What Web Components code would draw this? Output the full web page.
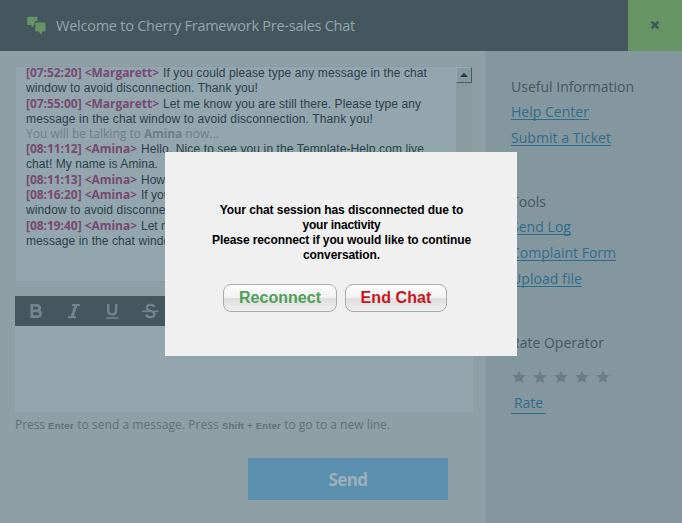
<!DOCTYPE html>
<html lang="en"><head><meta charset="utf-8"><title>Pre-sales Chat</title>
<style>
html,body{margin:0;width:682px;height:523px;overflow:hidden;background:#8e9fa6}
</style></head><body>
<chat-app></chat-app>
<script>
function define(name, html, ready){
  const t=document.createElement('template'); t.innerHTML=html;
  customElements.define(name, class extends HTMLElement{
    constructor(){super();this.attachShadow({mode:'open'}).append(t.content.cloneNode(true));}
    connectedCallback(){ if(ready) ready.call(this,this.shadowRoot); }
  });
}
/* Run of text tracked so that it spans the width given in "w". */
define('fit-text',`<style>:host{display:inline-block;white-space:pre}</style><slot></slot>`,function(){
  const w=+this.getAttribute('w'); if(!w) return;
  const n=this.textContent.length, nat=this.getBoundingClientRect().width;
  this.style.letterSpacing=((w-nat)/n).toFixed(4)+'px';
});
define('chat-header',`<style>
:host{display:flex;height:51px;background:#44565e;color:#93a6ae;font:14.5px/51px "Open Sans",sans-serif}
svg.b{width:19px;height:19px;margin:16px 10px 0 26.5px;flex:none}
.t{flex:1;padding-left:.5px}
.x{width:54px;background:#669465;display:flex;align-items:center;justify-content:center}
.x svg{margin-top:-2px}
</style>
<svg class="b" viewBox="0 0 19 19" fill="#669465"><path d="M1 .8h8.4q1 0 1 1V5H9.300q-1.800 0-1.800 1.800v1.700L5 11.600 4.300 9H1.500q-1.200 0-1.200-1.200V1.800q0-1 .7-1z"/><path d="M9.500 6.500h7.800q1.200 0 1.200 1.200v6.600q0 1.200-1.200 1.200H15.300l-.8 3.200L11.500 15.500H9.500q-1.200 0-1.200-1.200V7.700Q8.300 6.500 9.500 6.500z"/></svg>
<div class="t"><fit-text w="299">Welcome to Cherry Framework Pre-sales Chat</fit-text></div>
<div class="x"><svg width="10" height="10" viewBox="0 0 10 10"><path d="M1.600 1.600L8.400 8.400M8.400 1.600L1.600 8.400" stroke="#3f5a5a" stroke-width="2.700"/></svg></div>`);
define('chat-line',`<style>
:host{display:flex;box-sizing:border-box;height:15px;align-items:baseline;white-space:pre;font:12px/15px "Liberation Sans",Arial,sans-serif;color:#2b4049}
::slotted([slot=who]){font:bold 12px/15px "Open Sans",sans-serif;color:#774a70;margin-right:4px}
:host([wrap]){padding-top:1px}
:host([tall]){height:16px}
:host([info]){font:12px/15px "Open Sans",sans-serif;color:#6c7f86}
</style><slot name="who"></slot><slot></slot>`);
define('chat-log',`<style>
:host{display:flex;box-sizing:border-box;width:458px;height:216px;border:1px solid #8a9ca3;border-top-color:#889ba2;background:#93a6ad}
.m{flex:1;padding-left:10px;margin-top:-2px}
.s{width:16px;background:#899b9f}
.u{box-sizing:border-box;height:16px;border:1px solid;border-color:#9aacb3 #485b62 #485b62 #9aacb3;background:#869aa1;display:flex;align-items:center;justify-content:center}
</style><div class="m"><slot></slot></div><div class="s"><div class="u"><svg width="8" height="4"><path d="M0 4L4 0L8 4z" fill="#243940"/></svg></div></div>`);
define('chat-editor',`<style>
:host{display:block;width:458px}
.bar{height:30px;background:#44565e;display:flex;align-items:center;padding-left:11px;color:#71858c}
.bar svg{width:20px;height:20px;margin-right:18px;flex:none}
.a{height:86px;background:#93a6ad}
</style><div class="bar">
<svg viewBox="0 0 20 20" fill="none" stroke="currentColor" stroke-width="2.800"><path d="M5.800 4.400h4.700q3.200 0 3.200 2.700t-3.200 2.700H5.800zM5.800 9.800h5.400q3.400 0 3.400 2.900t-3.400 2.900H5.800z"/></svg>
<svg viewBox="0 0 20 20" fill="none" stroke="currentColor"><path d="M8 4h8M4 16.200h8" stroke-width="1.900"/><path d="M12 4L8 16.200" stroke-width="3"/></svg>
<svg viewBox="0 0 20 20" fill="none" stroke="currentColor"><path d="M6.200 3v6.300q0 4.200 4 4.200t4-4.200V3" stroke-width="2.300"/><path d="M4 17h12.400" stroke-width="1.700"/></svg>
<svg viewBox="0 0 20 20" fill="none" stroke="currentColor"><path d="M14.300 6Q13.500 3.800 10.300 3.800T6.700 6.600Q6.700 8.800 10 9.600T14.500 13Q14.500 16.200 10.500 16.200T6.200 13.500" stroke-width="2.300"/><path d="M2 10.300h16.500" stroke-width="1.600"/></svg>
</div><div class="a"></div>`);
define('side-group',`<style>
:host{display:block;font:14px/26px "Open Sans",sans-serif;color:#44565e}
.h{height:25px;line-height:25px}
</style><div class="h"><slot name="title"></slot></div><slot></slot>`);
define('side-link',`<style>
:host{display:block;height:26px;line-height:26px;color:#2f6c8b}
a{display:inline-block;line-height:14px;height:14px;border-bottom:1px solid #2f6c8b;white-space:pre}
</style><a><slot></slot></a>`);
define('star-row',`<style>:host{display:flex;gap:7px;height:14px;padding-left:.6px}svg{width:14px;height:14px}</style>`,function(r){
  for(let i=0;i<5;i++) r.innerHTML+='<svg viewBox="0 0 14 14"><path fill="#6b7e86" d="M7 .4l1.900 4.300 4.800.5-3.500 3.200 1 4.700L7 10.700l-4.200 2.400 1-4.700L.3 5.200l4.800-.5z"/></svg>';
});
define('modal-button',`<style>
:host{display:flex;box-sizing:border-box;height:28px;border:1px solid #a9aaad;border-radius:8px;background:linear-gradient(#fdfdfd,#f1f1f1 48%,#dedede 52%,#efefef);align-items:center;justify-content:center;font:bold 16px/26px "Liberation Sans",Arial,sans-serif}
</style><slot></slot>`);
define('session-modal',`<style>
:host{position:absolute;left:165px;top:152px;width:352px;height:204px;background:#f0f0f0;box-sizing:border-box;padding-top:51px;display:flex;flex-direction:column;align-items:center;font:bold 12px/15px "Liberation Sans",Arial,sans-serif;color:#000}
.b{display:flex;gap:8px;margin-top:20.500px;margin-right:12px}
.l{height:15px;padding-left:1px}
</style>
<div class="l"><fit-text w="243.500">Your chat session has disconnected due to</fit-text></div>
<div class="l"><fit-text w="78">your inactivity</fit-text></div>
<div class="l"><fit-text w="259">Please reconnect if you would like to continue</fit-text></div>
<div class="l"><fit-text w="77">conversation.</fit-text></div>
<div class="b"><modal-button style="width:114px;color:#4f9f56"><fit-text w="82">Reconnect</fit-text></modal-button>
<modal-button style="width:102px;color:#c8161d"><fit-text w="71">End Chat</fit-text></modal-button></div>`);
define('chat-app',`<style>
:host{display:block;position:relative;width:682px;height:523px;background:#8e9fa6;overflow:hidden}
.body{display:flex;height:472px}
main{width:486px;box-sizing:border-box;padding:15px 0 0 15px}
aside{flex:1;background:#85979e;padding:23px 0 0 25px}
chat-editor{margin-top:14px}
.hint{display:flex;align-items:baseline;white-space:pre;font:12px/16px "Open Sans",sans-serif;color:#5f7279;margin-top:5px;height:16px}
.hint b{font:bold 9.500px/16px "Liberation Sans",Arial,sans-serif}
.send{width:200px;height:42px;margin:25px 0 0 233px;background:#5b8fae;color:#9db0b8;font:bold 17px/44px "Open Sans",sans-serif;text-align:center}
side-group{height:115px}
.rate{color:#2f6c8b;font:14px/20px "Open Sans",sans-serif;width:35px;height:20px;border-bottom:1px solid #2f6c8b;text-align:center;margin-top:9px}
</style>
<chat-header></chat-header>
<div class="body"><main>
<chat-log>
<chat-line><fit-text slot="who" w="133">[07:52:20] &lt;Margarett&gt;</fit-text><fit-text w="264">If you could please type any message in the chat</fit-text></chat-line>
<chat-line tall wrap><fit-text w="232">window to avoid disconnection. Thank you!</fit-text></chat-line>
<chat-line><fit-text slot="who" w="133">[07:55:00] &lt;Margarett&gt;</fit-text><fit-text w="258">Let me know you are still there. Please type any</fit-text></chat-line>
<chat-line wrap><fit-text w="347">message in the chat window to avoid disconnection. Thank you!</fit-text></chat-line>
<chat-line info><fit-text w="118">You will be talking to </fit-text><b><fit-text w="38">Amina</fit-text></b><fit-text w="37"> now...</fit-text></chat-line>
<chat-line><fit-text slot="who" w="111">[08:11:12] &lt;Amina&gt;</fit-text><fit-text w="283">Hello. Nice to see you in the Template-Help.com live</fit-text></chat-line>
<chat-line tall wrap><fit-text w="132">chat! My name is Amina.</fit-text></chat-line>
<chat-line><fit-text slot="who" w="111">[08:11:13] &lt;Amina&gt;</fit-text><span>How</span></chat-line>
<chat-line><fit-text slot="who" w="111">[08:16:20] &lt;Amina&gt;</fit-text><span>If you</span></chat-line>
<chat-line tall wrap><fit-text w="169">window to avoid disconnection.</fit-text></chat-line>
<chat-line><fit-text slot="who" w="111">[08:19:40] &lt;Amina&gt;</fit-text><span>Let me</span></chat-line>
<chat-line wrap><fit-text w="153">message in the chat window</fit-text></chat-line>
</chat-log>
<chat-editor></chat-editor>
<div class="hint"><fit-text w="33">Press </fit-text><b><fit-text w="26">Enter</fit-text></b><fit-text w="148"> to send a message. Press </fit-text><b><fit-text w="59">Shift + Enter</fit-text></b><fit-text w="109"> to go to a new line.</fit-text></div>
<div class="send"><fit-text w="39">Send</fit-text></div>
</main><aside>
<side-group><fit-text slot="title" w="123">Useful Information</fit-text><side-link><fit-text w="78">Help Center</fit-text></side-link><side-link><fit-text w="100">Submit a Ticket</fit-text></side-link></side-group>
<side-group style="height:141px"><fit-text slot="title" w="35">Tools</fit-text><side-link><fit-text w="60">Send Log</fit-text></side-link><side-link><fit-text w="105">Complaint Form</fit-text></side-link><side-link><fit-text w="71">Upload file</fit-text></side-link></side-group>
<side-group style="height:40px"><fit-text slot="title" w="93">Rate Operator</fit-text></side-group>
<star-row></star-row>
<div class="rate"><fit-text w="29">Rate</fit-text></div>
</aside></div>
<session-modal></session-modal>`);
</script></body></html>
